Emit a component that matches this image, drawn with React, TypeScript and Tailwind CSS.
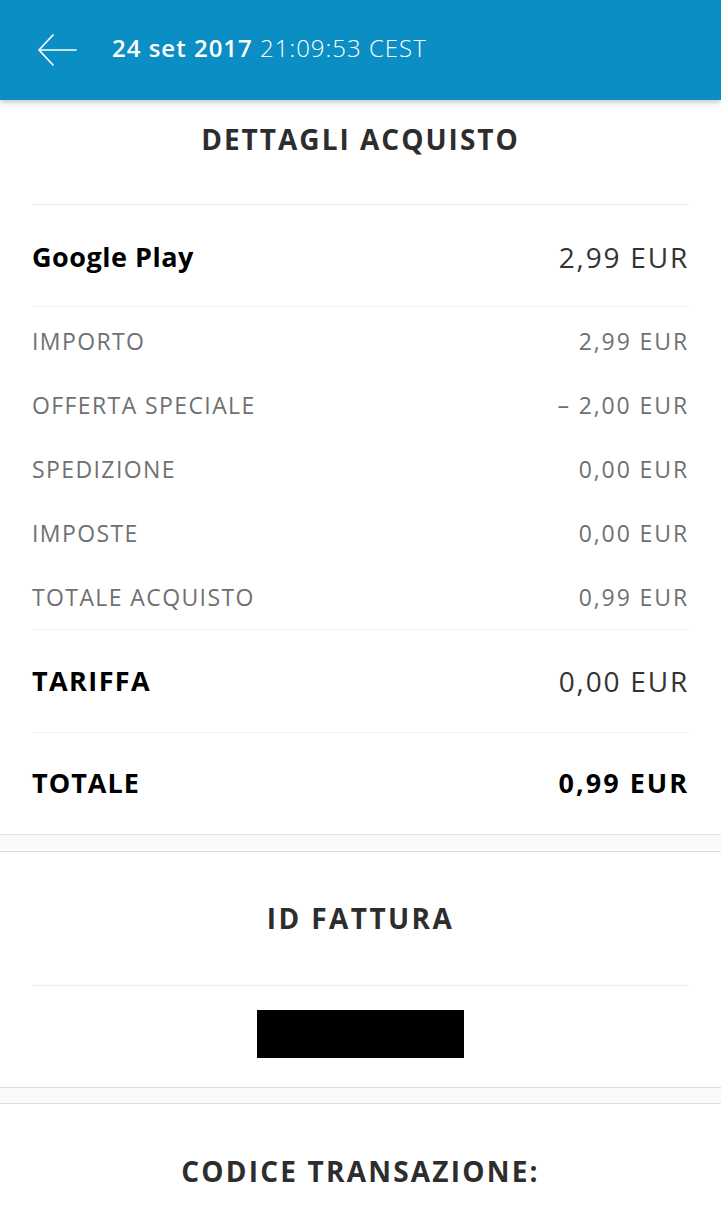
import React from 'react';

const font = { fontFamily: '"Open Sans", "Noto Sans", sans-serif' };

const details = [
  { label: 'IMPORTO', value: '2,99 EUR' },
  { label: 'OFFERTA SPECIALE', value: '– 2,00 EUR' },
  { label: 'SPEDIZIONE', value: '0,00 EUR' },
  { label: 'IMPOSTE', value: '0,00 EUR' },
  { label: 'TOTALE ACQUISTO', value: '0,99 EUR' },
];

const BackArrow = () => (
  <svg width="40" height="34" viewBox="0 0 40 34" fill="none" stroke="white" strokeWidth="1.7" strokeLinecap="round" strokeLinejoin="round">
    <path d="M39 17H3" />
    <path d="M16 2L2 17l14 15" />
  </svg>
);

export default function App() {
  return (
    <div className="min-h-[1219px] bg-white text-[#2c2e2f]" style={font}>
      <header className="h-[100px] bg-[#0b8ec3] flex items-center pl-[37px] shadow-[0_2px_6px_rgba(0,0,0,0.25)] relative z-10">
        <BackArrow />
        <div className="ml-[35px] text-white text-[24px] leading-none tracking-[1px] mt-[-4px]">
          <span className="font-semibold">24 set 2017</span>{' '}
          <span className="font-light">21:09:53 CEST</span>
        </div>
      </header>

      <section className="px-[32px] border-b border-[#e4e4e4]">
        <h2 className="h-[105px] flex items-center justify-center pb-[26px] text-[28px] font-bold tracking-[2px] text-[#2d2d2d] border-b border-[#eeeeee]">
          DETTAGLI ACQUISTO
        </h2>
        <div className="h-[102px] flex items-center justify-between pt-[3px] border-b border-[#f0f0f0]">
          <span className="text-[27px] font-bold text-black tracking-[0.5px]">Google Play</span>
          <span className="text-[28px] text-[#333] tracking-[1.8px]">2,99 EUR</span>
        </div>
        <div className="pt-[2px] border-b border-[#f0f0f0]">
          {details.map((d) => (
            <div key={d.label} className="h-[64px] flex items-center justify-between text-[23px] text-[#6f7071]">
              <span className="tracking-[1.4px]">{d.label}</span>
              <span className="tracking-[1.9px]">{d.value}</span>
            </div>
          ))}
        </div>
        <div className="h-[103px] flex items-center justify-between border-b border-[#f0f0f0]">
          <span className="text-[27px] font-bold text-black tracking-[1.4px]">TARIFFA</span>
          <span className="text-[28px] text-[#333] tracking-[1.8px]">0,00 EUR</span>
        </div>
        <div className="h-[101px] flex items-center justify-between">
          <span className="text-[27px] font-bold text-black tracking-[1px]">TOTALE</span>
          <span className="text-[27px] font-bold text-black tracking-[2px]">0,99 EUR</span>
        </div>
      </section>

      <div className="h-[16px] bg-[#fafafa]" />

      <section className="px-[32px] border-t border-b border-[#dedede]">
        <h2 className="h-[134px] flex items-center justify-center pb-[2px] text-[28px] font-bold tracking-[2.4px] text-[#2d2d2d] border-b border-[#eeeeee]">
          ID FATTURA
        </h2>
        <div className="h-[101px] flex justify-center pt-[24px]">
          <div className="w-[207px] h-[48px] bg-black" />
        </div>
      </section>

      <div className="h-[15px] bg-[#fafafa]" />

      <section className="px-[32px] border-t border-[#dedede]">
        <h2 className="h-[134px] flex items-center justify-center text-[28px] font-bold tracking-[2.2px] text-[#2d2d2d]">
          CODICE TRANSAZIONE:
        </h2>
      </section>
    </div>
  );
}
